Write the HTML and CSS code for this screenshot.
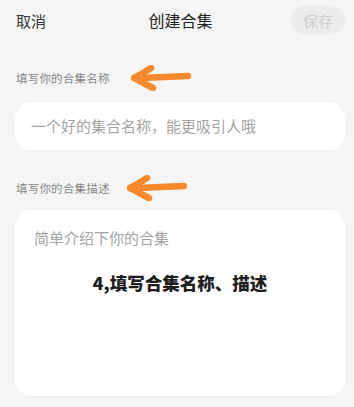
FILE: index.html
```html
<!DOCTYPE html>
<html lang="zh">
<head>
<meta charset="utf-8">
<link rel="stylesheet" href="styles.css">
</head>
<body>
<div class="page">
  <header class="topbar">
    <span class="cancel">取消</span>
    <span class="title">创建合集</span>
    <span class="save">保存</span>
  </header>

  <div class="label-row first">
    <span class="label">填写你的合集名称</span>
    <svg class="arrow" width="60" height="26" viewBox="0 0 60 26">
      <path d="M57 11 C45 11.5 30 12 4 13.2" />
      <path d="M20 3 C14 7 8 10.5 3 13 C9 16 15 19.5 22 23" />
    </svg>
  </div>
  <div class="card name-card">
    <span class="placeholder">一个好的集合名称，能更吸引人哦</span>
  </div>

  <div class="label-row second">
    <span class="label">填写你的合集描述</span>
    <svg class="arrow" width="60" height="26" viewBox="0 0 60 26">
      <path d="M57 11 C45 11.5 30 12 4 13.2" />
      <path d="M20 3 C14 7 8 10.5 3 13 C9 16 15 19.5 22 23" />
    </svg>
  </div>
  <div class="card desc-card">
    <div class="placeholder">简单介绍下你的合集</div>
    <div class="note">4,填写合集名称、描述</div>
  </div>
</div>
</body>
</html>
```

FILE: styles.css
```css
* { box-sizing: border-box; }
html, body {
  margin: 0;
  padding: 0;
  background: #f5f5f5;
}
body {
  font-family: "Noto Sans CJK SC", "Noto Sans", sans-serif;
  width: 354px;
  height: 407px;
  overflow: hidden;
}
.page {
  display: flex;
  flex-direction: column;
}
.topbar {
  height: 40px;
  display: flex;
  align-items: center;
  justify-content: space-between;
  padding: 0 9px 0 16px;
}
.cancel {
  font-size: 15px;
  color: #333;
  width: 54px;
}
.title {
  font-size: 16px;
  color: #222;
}
.save {
  width: 54px;
  height: 28px;
  border-radius: 14px;
  background: #ececec;
  color: #cfcfcf;
  font-size: 15px;
  display: flex;
  align-items: center;
  justify-content: center;
}
.label-row {
  display: flex;
  align-items: center;
  height: 26px;
  padding-left: 16px;
  gap: 21px;
}
.label-row.first { margin-top: 25px; }
.label-row.second { margin-top: 25px; gap: 17px; }
.label {
  font-size: 11.5px;
  color: #858585;
  letter-spacing: 0.2px;
}
.arrow path {
  fill: none;
  stroke: #f7892d;
  stroke-width: 6.5;
  stroke-linecap: round;
  stroke-linejoin: round;
}
.card {
  margin: 0 9px 0 15px;
  background: #fff;
  border-radius: 16px;
}
.name-card {
  margin-top: 11px;
  height: 48px;
  display: flex;
  align-items: center;
  padding-left: 16px;
}
.placeholder {
  font-size: 15px;
  color: #a3a3a3;
  line-height: 20px;
}
.desc-card {
  margin-top: 9px;
  height: 186px;
  padding: 18px 0 0 19px;
  box-shadow: 0 1px 2px rgba(0,0,0,0.04);
}
.note {
  margin-top: 25px;
  margin-left: -19px;
  text-align: center;
  font-size: 17.5px;
  line-height: 20px;
  font-weight: 900;
  color: #1e1e1e;
}
```
